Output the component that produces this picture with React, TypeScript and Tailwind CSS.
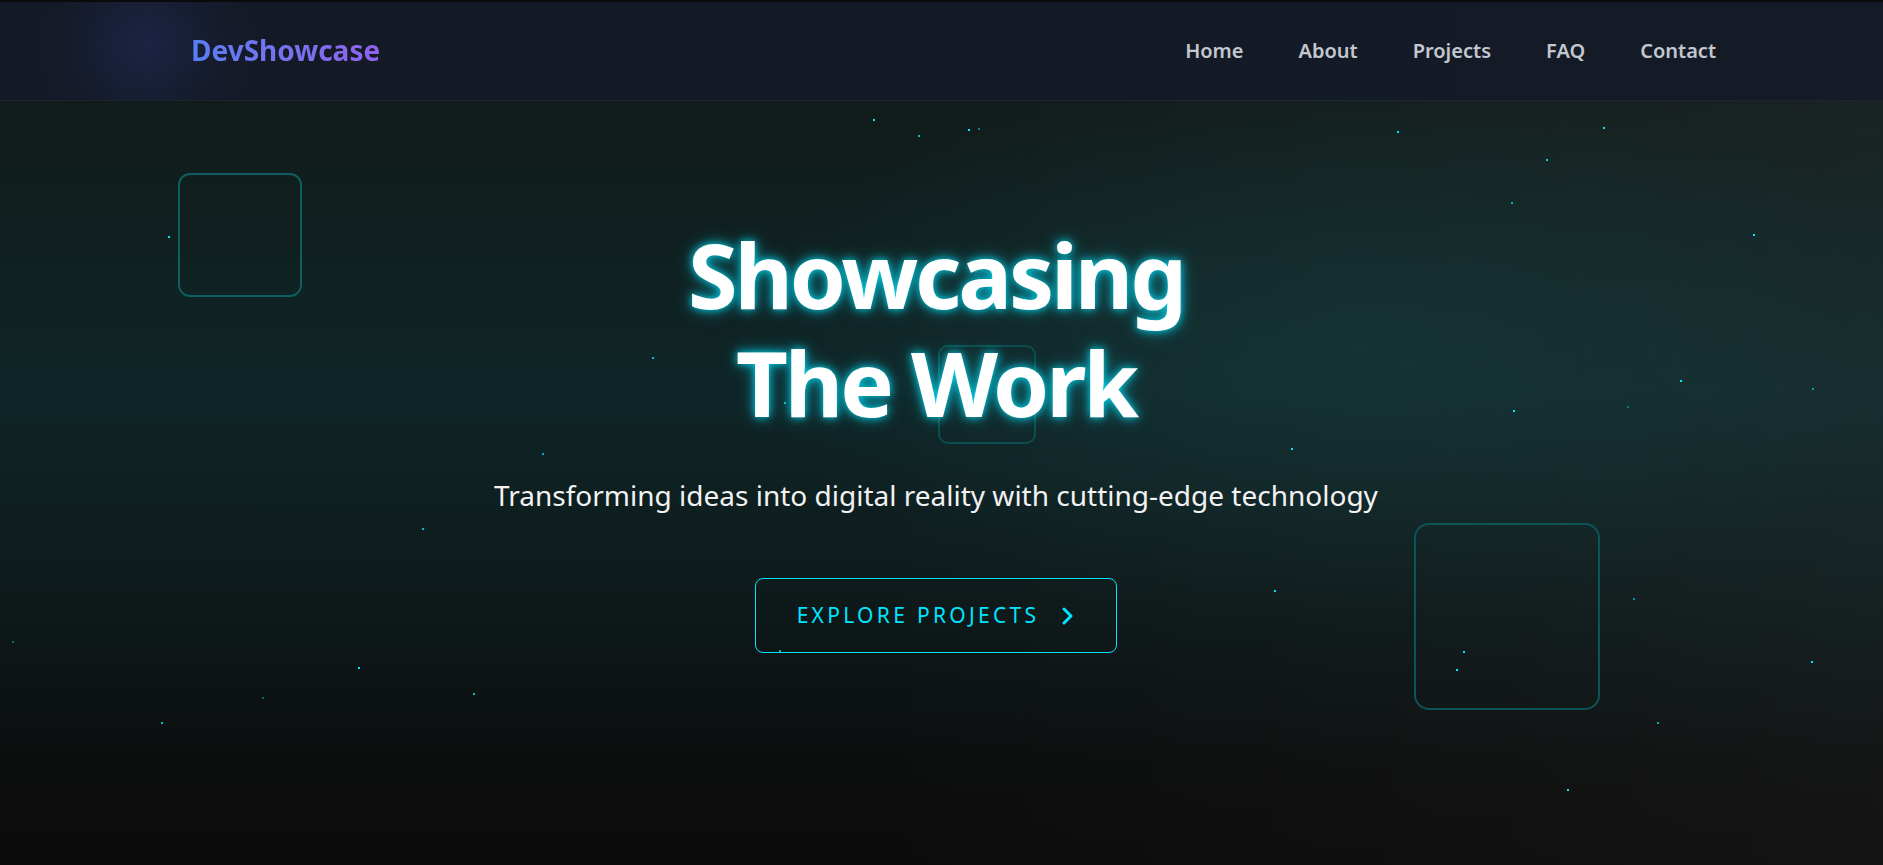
import React from 'react';

const particles: [number, number, number][] = [
  [873, 119, 1], [918, 135, 0.8], [968, 129, 1], [978, 128, 0.5], [1397, 131, 1],
  [1603, 127, 1], [1546, 159, 0.9], [1511, 202, 0.7], [1753, 234, 1], [168, 236, 1],
  [652, 357, 0.8], [1680, 380, 1], [1812, 388, 0.6], [1627, 406, 0.4], [784, 402, 0.8],
  [1513, 410, 1], [542, 453, 0.7], [1291, 448, 1], [422, 528, 0.8], [1274, 590, 1],
  [1633, 598, 0.6], [12, 641, 0.4], [779, 650, 0.8], [1463, 651, 1], [1456, 669, 1],
  [358, 667, 1], [1811, 661, 1], [473, 693, 0.8], [262, 697, 0.4], [161, 722, 0.8],
  [1657, 722, 0.7], [1567, 789, 1],
];

const navLinks = ['Home', 'About', 'Projects', 'FAQ', 'Contact'];

const App = () => {
  return (
    <div className="min-h-screen flex flex-col bg-[#0b0b0b] font-['Noto_Sans',sans-serif]">
      {/* Top strip */}
      <div className="h-[2px] bg-[#0a0a0a]"></div>

      {/* Navbar */}
      <nav className="h-[99px] flex items-center justify-between pl-[191px] pr-[167px] border-b border-[#1e2532] bg-[radial-gradient(circle_at_146px_42px,#1d2443_0%,#19203a_30px,#151b2a_80px,transparent_120px),linear-gradient(to_right,#131925,#151b26)]">
        <div className="text-[28px] font-bold leading-none pb-[2px] bg-gradient-to-r from-[#567ff2] to-[#8f62ee] bg-clip-text text-transparent">
          DevShowcase
        </div>
        <ul className="flex items-center gap-[55px] text-[20px] font-semibold text-[#c3c7cf]">
          {navLinks.map((link) => (
            <li key={link}>{link}</li>
          ))}
        </ul>
      </nav>

      {/* Hero */}
      <section className="relative flex-1 overflow-hidden bg-[radial-gradient(ellipse_900px_380px_at_72%_32%,rgba(22,64,66,0.45),transparent_70%),linear-gradient(to_right,transparent_45%,rgba(255,255,255,0.035)),linear-gradient(to_bottom,#111b1a_0%,#0f2527_38%,#0e1c1d_60%,#0c0d0d_88%,#0b0b0b_100%)]">
        {/* Floating squares */}
        <div className="absolute left-[178px] top-[72px] w-[124px] h-[124px] rounded-[12px] border-2 border-[#0d5d61]"></div>
        <div className="absolute left-[938px] top-[244px] w-[98px] h-[99px] rounded-[10px] border-2 border-[#0d4d50]"></div>
        <div className="absolute left-[1414px] top-[422px] w-[186px] h-[187px] rounded-[15px] border-2 border-[#0d5458]"></div>

        {/* Particles */}
        {particles.map(([x, y, o], i) => (
          <span
            key={i}
            className="absolute w-[2px] h-[2px] bg-[#00e5ff]"
            style={{ left: x, top: y - 101, opacity: o }}
          ></span>
        ))}

        {/* Content */}
        <div className="relative flex flex-col items-center pt-[119px] pr-[11px]">
          <h1 className="text-center text-[90px] leading-[108px] font-bold tracking-[-0.035em] text-white [text-shadow:0_0_8px_rgba(0,229,255,0.9),0_0_18px_rgba(0,229,255,0.45)]">
            Showcasing
            <br />
            The Work
          </h1>
          <p className="mt-[41px] text-[28px] leading-[37px] text-[#f2f2f2]">
            Transforming ideas into digital reality with cutting-edge technology
          </p>
          <button className="mt-[64px] h-[75px] w-[362px] flex items-center justify-center gap-[22px] rounded-[8px] border border-[#00e5ff] text-[#00e5ff] text-[21px] tracking-[3.3px]">
            <span>EXPLORE PROJECTS</span>
            <svg width="14" height="18" viewBox="0 0 14 18" fill="none">
              <path d="M3 2l7 7-7 7" stroke="#00e5ff" strokeWidth="3" strokeLinecap="round" strokeLinejoin="round" />
            </svg>
          </button>
        </div>
      </section>
    </div>
  );
};

export default App;
